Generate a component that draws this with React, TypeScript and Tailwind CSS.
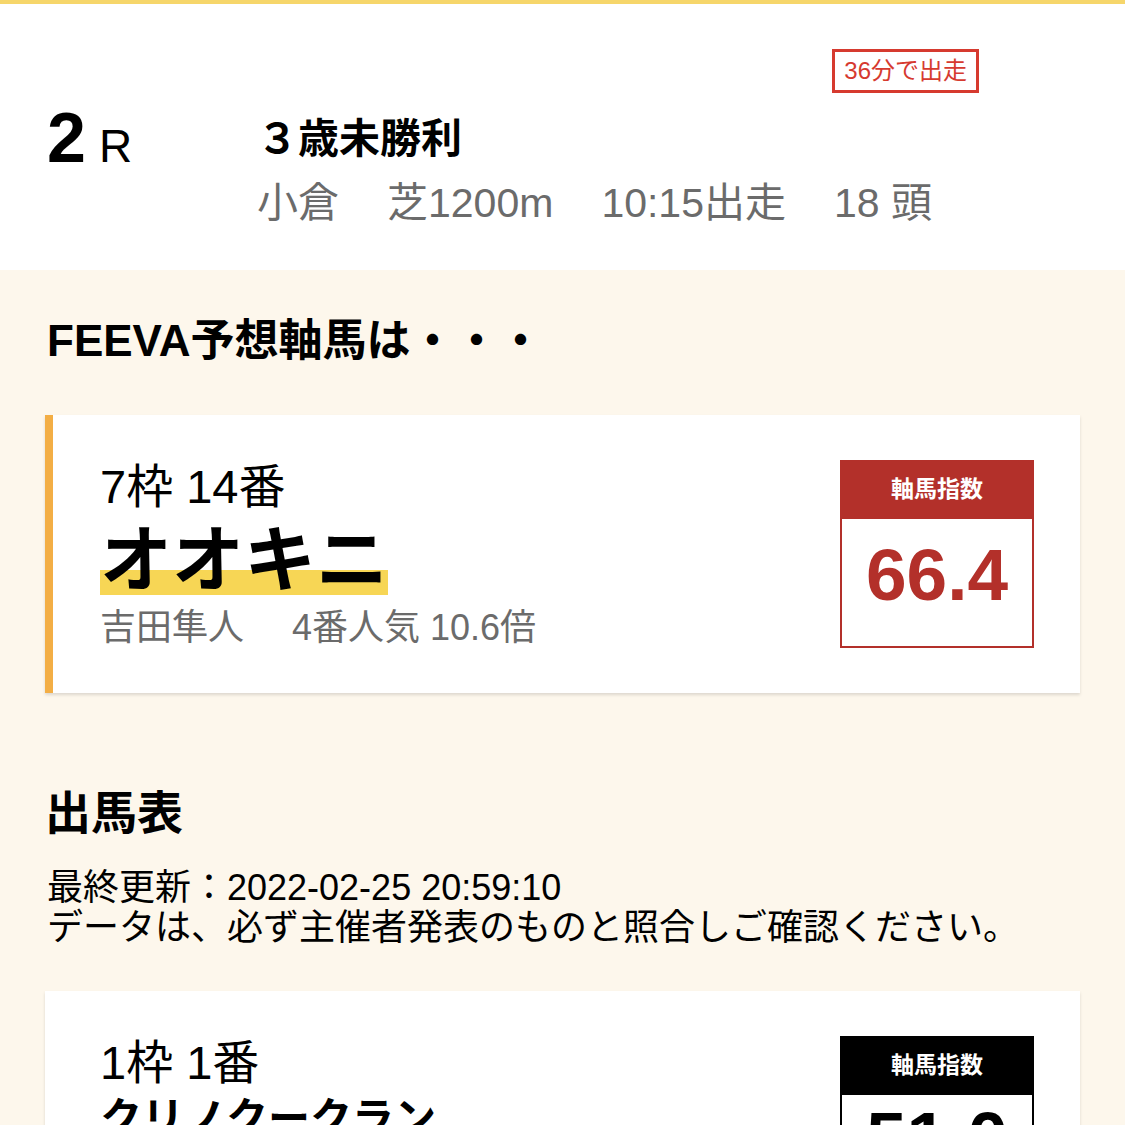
import React from "react";

type Horse = {
  waku: string;
  name: string;
  jockey: string;
  odds: string;
  index: string;
};

const pick: Horse = {
  waku: "7枠 14番",
  name: "オオキニ",
  jockey: "吉田隼人",
  odds: "4番人気 10.6倍",
  index: "66.4",
};

const entries: Horse[] = [
  { waku: "1枠 1番", name: "クリノクークラン", jockey: "", odds: "", index: "51.0" },
];

function IndexBox({ value, tone }: { value: string; tone: "red" | "black" }) {
  const red = tone === "red";
  return (
    <div className="w-[194px] shrink-0 flex flex-col">
      <div
        className={`${red ? "bg-[#b3302a]" : "bg-black"} h-[59px] flex items-center justify-center text-white text-[23px] font-bold`}
      >
        軸馬指数
      </div>
      <div
        className={`h-[129px] border-2 border-t-0 flex justify-center text-[73px] font-bold leading-none ${
          red
            ? "border-[#b3302a] text-[#b3302a] items-center pb-[16px]"
            : "border-black text-black items-start pt-[6px]"
        }`}
      >
        {value}
      </div>
    </div>
  );
}

function HorseCard({ horse, main }: { horse: Horse; main?: boolean }) {
  return (
    <div
      className={`bg-white shadow-[0_2px_3px_rgba(0,0,0,0.13)] flex justify-between pt-[45px] pb-[45px] pr-[46px] ${
        main ? "border-l-[8px] border-[#f3ae45] pl-[47px]" : "pl-[55px]"
      }`}
    >
      <div className="flex flex-col items-start">
        <div className="text-[47px] leading-[54px] text-black">{horse.waku}</div>
        {main ? (
          <div className="mt-[11px] text-[72px] leading-[70px] font-bold text-black bg-[linear-gradient(transparent_64%,#f7d655_64%)]">
            {horse.name}
          </div>
        ) : (
          <div className="mt-[4px] text-[42px] leading-[50px] font-bold text-black">
            {horse.name}
          </div>
        )}
        {horse.jockey && (
          <div className="mt-[13px] text-[36px] leading-[40px] text-[#6b6b6b] flex gap-[48px]">
            <span>{horse.jockey}</span>
            <span>{horse.odds}</span>
          </div>
        )}
      </div>
      <IndexBox value={horse.index} tone={main ? "red" : "black"} />
    </div>
  );
}

export default function App() {
  return (
    <div className="w-[1125px] min-h-[1125px] bg-[#fdf7ec] font-['Liberation_Sans','Noto_Sans_CJK_JP',sans-serif]">
      <header className="bg-white border-t-4 border-[#f6d66b] px-[47px] pt-[45px] pb-[42px]">
        <div className="flex justify-end pr-[99px]">
          <div className="border-[3px] border-[#d63a2f] text-[#d63a2f] text-[24px] leading-[38px] px-[9px]">
            36分で出走
          </div>
        </div>
        <div className="flex mt-[10px]">
          <div className="w-[210px] flex items-baseline leading-none text-black">
            <span className="text-[70px] font-bold">2</span>
            <span className="text-[46px] ml-[13px]">R</span>
          </div>
          <div className="pt-[12px]">
            <div className="text-[41px] leading-[48px] font-bold text-black">３歳未勝利</div>
            <div className="mt-[16px] text-[41px] leading-[49px] text-[#6b6b6b] flex gap-[48px]">
              <span>小倉</span>
              <span>芝1200m</span>
              <span>10:15出走</span>
              <span>18 頭</span>
            </div>
          </div>
        </div>
      </header>

      <main className="px-[45px] pt-[44px]">
        <h2 className="text-[44px] leading-[53px] font-bold text-black pl-[2px]">
          FEEVA予想軸馬は・・・
        </h2>
        <div className="mt-[48px]">
          <HorseCard horse={pick} main />
        </div>

        <h2 className="mt-[94px] text-[46px] leading-[53px] font-bold text-black">
          出馬表
        </h2>
        <div className="mt-[28px] text-[36px] leading-[40px] text-black pl-[2px]">
          <p>最終更新：2022-02-25 20:59:10</p>
          <p>データは、必ず主催者発表のものと照合しご確認ください。</p>
        </div>

        <div className="mt-[43px] flex flex-col gap-[40px]">
          {entries.map((h) => (
            <HorseCard key={h.waku} horse={h} />
          ))}
        </div>
      </main>
    </div>
  );
}
